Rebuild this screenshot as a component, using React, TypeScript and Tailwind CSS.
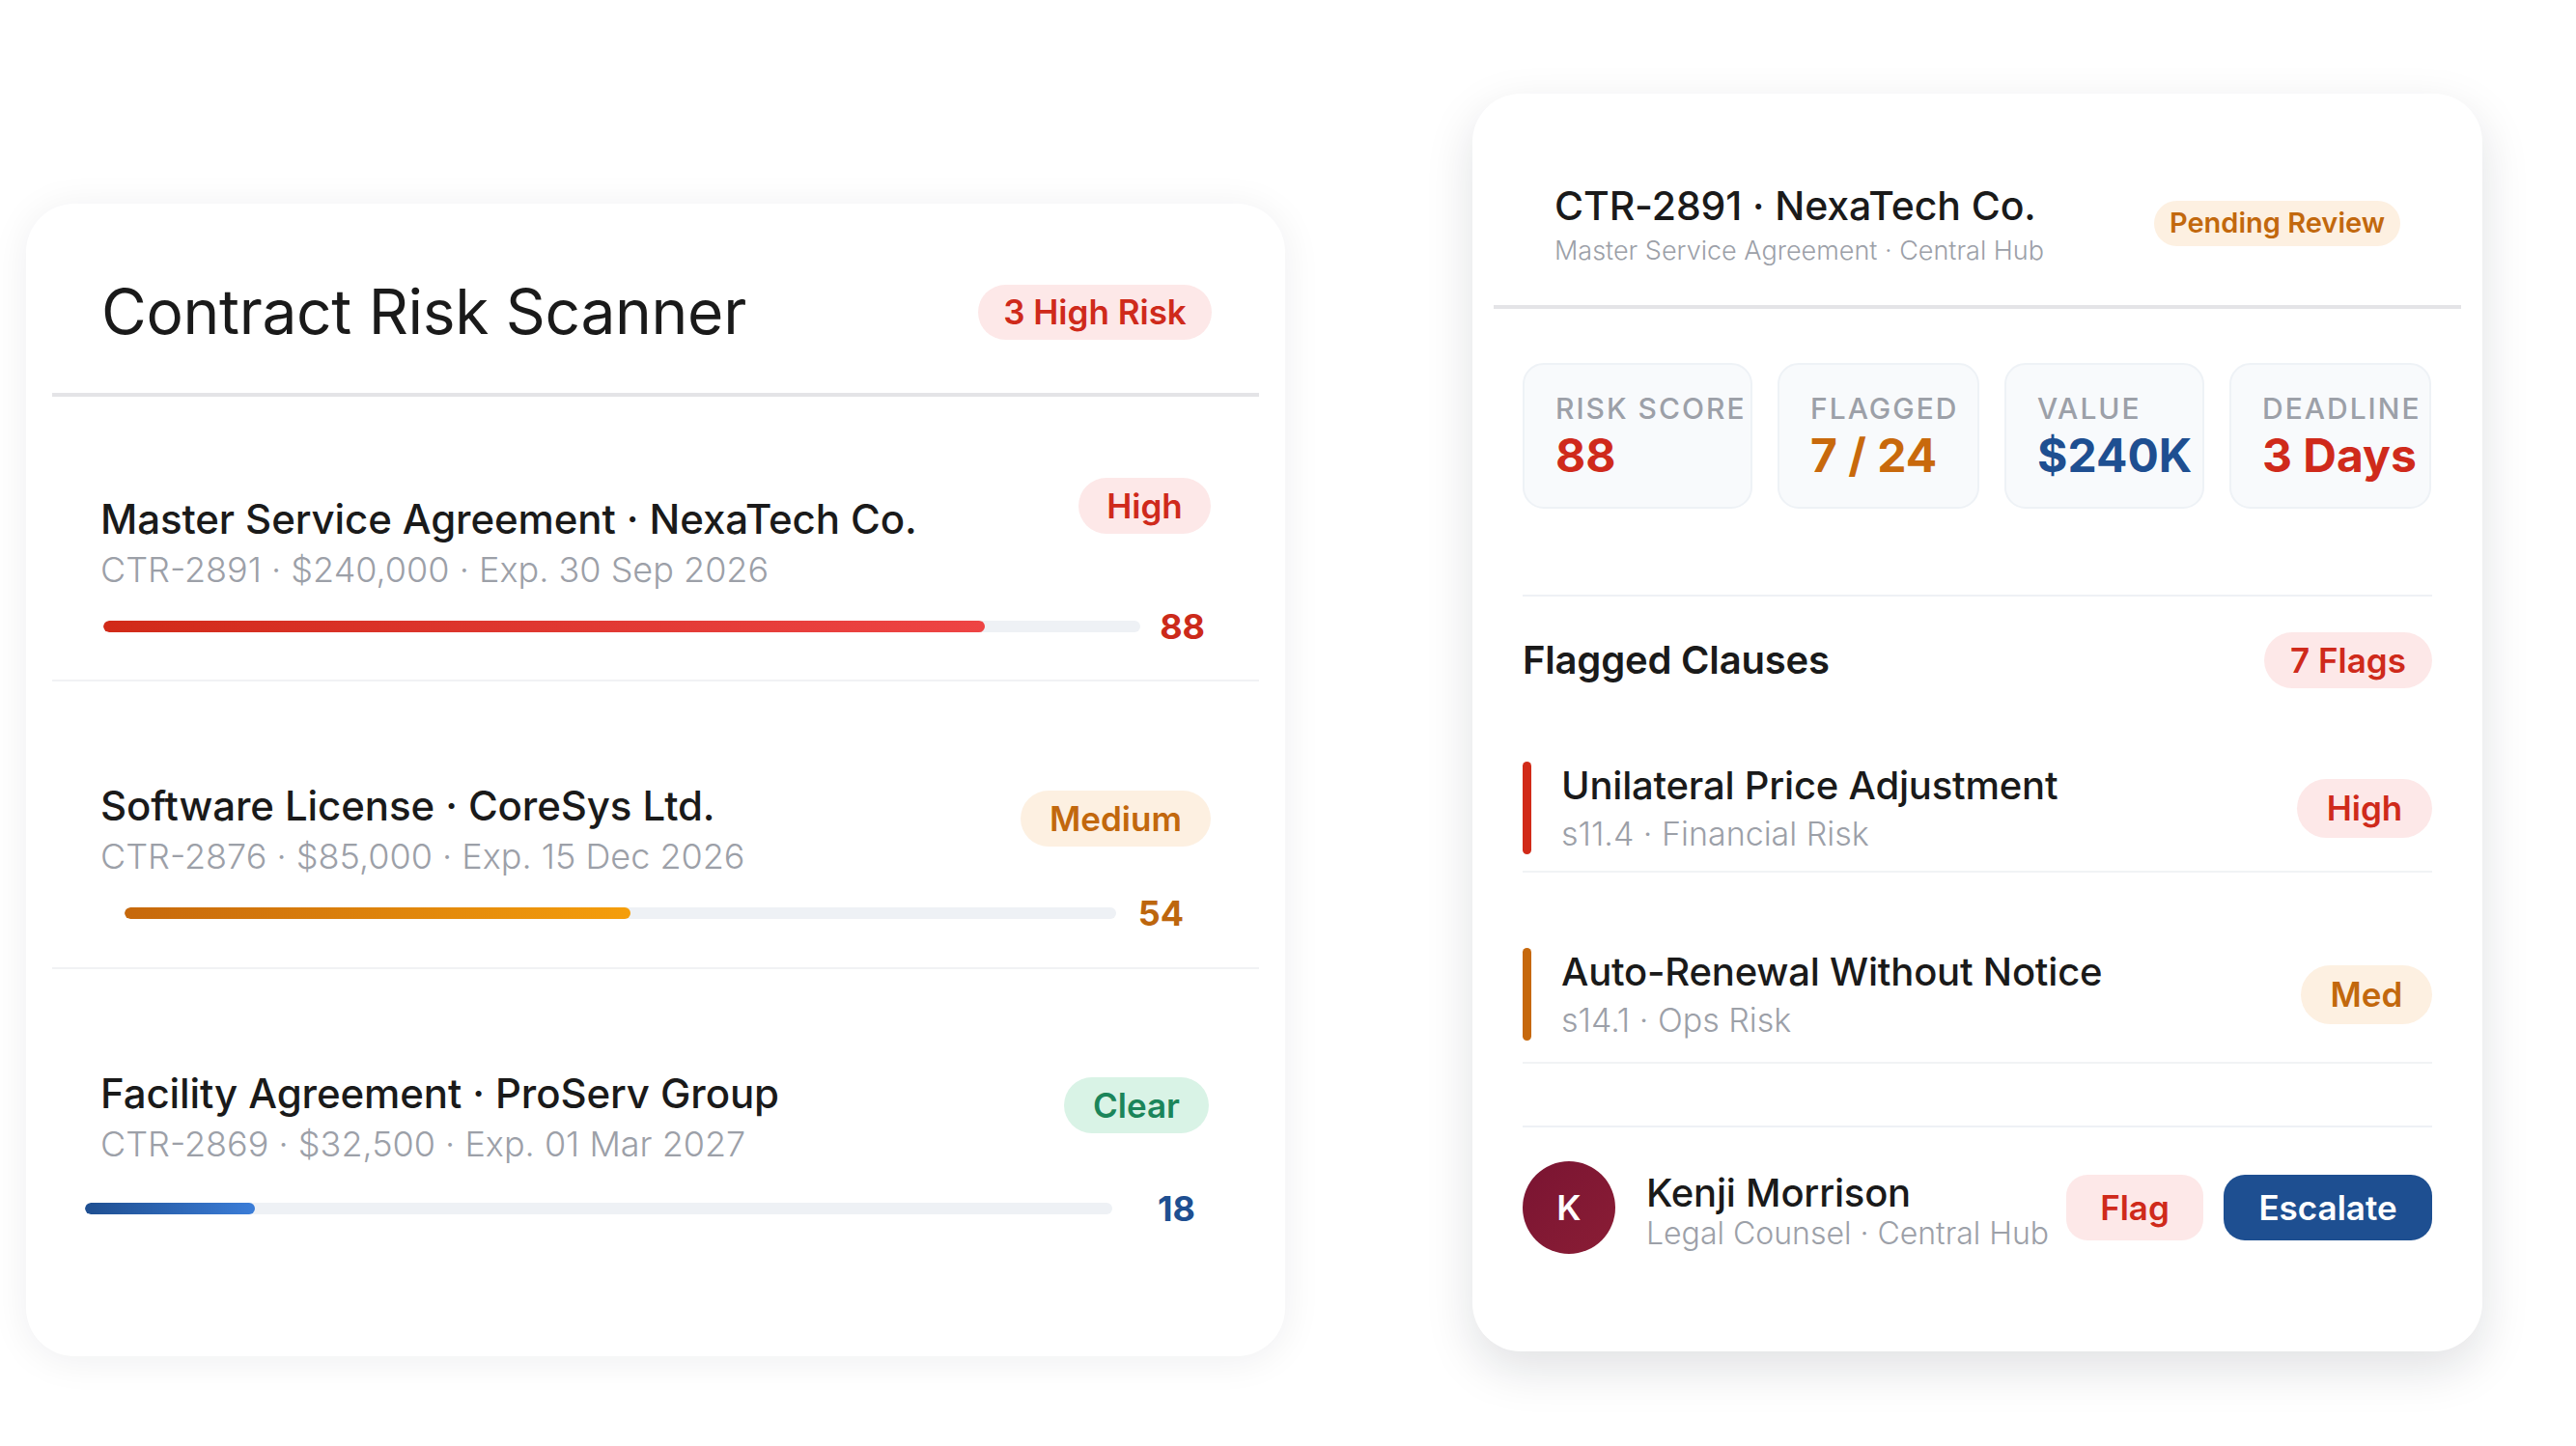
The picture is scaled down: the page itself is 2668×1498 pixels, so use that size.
import React from "react";

type Tone = "red" | "amber" | "green" | "blue";

const PILL: Record<Tone, string> = {
  red: "bg-[#fde8e8] text-[#cf2a1b]",
  amber: "bg-[#fdf0e1] text-[#c2680d]",
  green: "bg-[#d9f3e6] text-[#1b855a]",
  blue: "bg-[#e3ecf8] text-[#1e4f91]",
};

const Pill = ({
  tone,
  children,
  className = "",
}: {
  tone: Tone;
  children: React.ReactNode;
  className?: string;
}) => (
  <span
    className={`inline-flex items-center justify-center rounded-full font-semibold whitespace-nowrap ${PILL[tone]} ${className}`}
  >
    {children}
  </span>
);

type Contract = {
  title: string;
  meta: string;
  level: string;
  tone: Tone;
  score: number;
  fill: number;
  barColor: string;
  scoreColor: string;
  rowPad: string;
  badgeShift: string;
  badgeSize: string;
  barWrap: string;
  barTop: string;
};

const CONTRACTS: Contract[] = [
  {
    title: "Master Service Agreement · NexaTech Co.",
    meta: "CTR-2891 · $240,000 · Exp. 30 Sep 2026",
    level: "High",
    tone: "red",
    score: 88,
    fill: 85,
    barColor: "bg-gradient-to-r from-[#d12a18] to-[#ee4444]",
    scoreColor: "text-[#cc2a1a]",
    rowPad: "pt-[101px] pb-[33px]",
    badgeShift: "-mt-[17px] w-[137px]",
    badgeSize: "h-[58px]",
    barWrap: "ml-[3px] mr-[6px] gap-[20px]",
    barTop: "mt-[15px]",
  },
  {
    title: "Software License · CoreSys Ltd.",
    meta: "CTR-2876 · $85,000 · Exp. 15 Dec 2026",
    level: "Medium",
    tone: "amber",
    score: 54,
    fill: 51,
    barColor: "bg-gradient-to-r from-[#c6680c] to-[#f59e0b]",
    scoreColor: "text-[#bd660d]",
    rowPad: "pt-[103px] pb-[34px]",
    badgeShift: "mt-[10px] w-[197px]",
    badgeSize: "h-[58px]",
    barWrap: "ml-[25px] mr-[28px] gap-[23px]",
    barTop: "mt-[15px]",
  },
  {
    title: "Facility Agreement · ProServ Group",
    meta: "CTR-2869 · $32,500 · Exp. 01 Mar 2027",
    level: "Clear",
    tone: "green",
    score: 18,
    fill: 16.5,
    barColor: "bg-gradient-to-r from-[#1f4f91] to-[#3b7dd8]",
    scoreColor: "text-[#1e4f91]",
    rowPad: "pt-[103px]",
    badgeShift: "mt-[9px] w-[150px] mr-[2px]",
    badgeSize: "h-[58px]",
    barWrap: "-ml-[16px] mr-[16px] gap-[47px]",
    barTop: "mt-[23px]",
  },
];

const ContractRow = ({ c, last }: { c: Contract; last: boolean }) => (
  <div className={`px-[50px] ${c.rowPad} ${last ? "" : "border-b-2 border-[#f1f2f4]"}`}>
    <div className="flex items-start justify-between">
      <div className="flex flex-col">
        <div className="text-[42px] leading-[52px] font-medium text-[#1a1a1a] tracking-[-0.1px]">
          {c.title}
        </div>
        <div className="mt-[4px] text-[36px] leading-[44px] font-light text-[#9ca0a8]">
          {c.meta}
        </div>
      </div>
      <Pill tone={c.tone} className={`${c.badgeShift} ${c.badgeSize} text-[35px]`}>
        {c.level}
      </Pill>
    </div>
    <div className={`flex items-center ${c.barWrap} ${c.barTop}`}>
      <div className="flex-1 h-[12px] rounded-full bg-[#eef1f5] overflow-hidden">
        <div className={`h-full rounded-full ${c.barColor}`} style={{ width: `${c.fill}%` }} />
      </div>
      <span className={`text-[36px] leading-[44px] font-bold ${c.scoreColor}`}>{c.score}</span>
    </div>
  </div>
);

const STATS = [
  { label: "RISK SCORE", value: "88", color: "text-[#cf2a1b]", w: "w-[238px]" },
  { label: "FLAGGED", value: "7 / 24", color: "text-[#c8690c]", w: "w-[209px]" },
  { label: "VALUE", value: "$240K", color: "text-[#1e4f91]", w: "w-[207px]" },
  { label: "DEADLINE", value: "3 Days", color: "text-[#cf2a1b]", w: "w-[209px]" },
];

const CLAUSES = [
  {
    title: "Unilateral Price Adjustment",
    meta: "s11.4 · Financial Risk",
    level: "High",
    tone: "red" as Tone,
    bar: "bg-[#d12a18]",
    pad: "pt-[76px] pb-[17px]",
    badge: "w-[140px] h-[61px]",
  },
  {
    title: "Auto-Renewal Without Notice",
    meta: "s14.1 · Ops Risk",
    level: "Med",
    tone: "amber" as Tone,
    bar: "bg-[#c6680c]",
    pad: "pt-[78px] pb-[22px]",
    badge: "w-[136px] h-[61px]",
  },
];

const ScannerCard = () => (
  <div className="w-[1304px] h-[1194px] mt-[211px] shrink-0 rounded-[50px] bg-white px-[27px] shadow-[0_4px_40px_rgba(15,23,42,0.07)]">
    <div className="flex items-center justify-between px-[51px] pt-[72px] pb-[44px]">
      <h1 className="text-[64px] leading-[80px] font-normal text-[#1a1a1a] tracking-[-0.3px]">
        Contract Risk Scanner
      </h1>
      <Pill tone="red" className="w-[242px] h-[57px] text-[35px] -mr-[2px]">
        3 High Risk
      </Pill>
    </div>
    <div className="h-[4px] bg-[#e4e4e7]" />
    {CONTRACTS.map((c, i) => (
      <ContractRow key={c.title} c={c} last={i === CONTRACTS.length - 1} />
    ))}
  </div>
);

const DetailCard = () => (
  <div className="w-[1046px] h-[1303px] mt-[97px] shrink-0 rounded-[50px] bg-white px-[22px] shadow-[0_18px_50px_rgba(15,23,42,0.13)]">
    <div className="flex items-center justify-between px-[63px] pt-[91px] pb-[38px]">
      <div className="flex flex-col">
        <div className="text-[41px] leading-[50px] font-medium text-[#1a1a1a] tracking-[-0.1px]">
          CTR-2891 · NexaTech Co.
        </div>
        <div className="mt-[4px] text-[27px] leading-[36px] font-light text-[#9ca0a8]">
          Master Service Agreement · Central Hub
        </div>
      </div>
      <Pill tone="amber" className="w-[255px] h-[47px] text-[29px] font-medium mt-[-4px]">
        Pending Review
      </Pill>
    </div>
    <div className="h-[4px] bg-[#e4e4e7]" />

    <div className="px-[30px]">
      <div className="mt-[56px] flex gap-[26px]">
        {STATS.map((s) => (
          <div
            key={s.label}
            className={`${s.w} h-[151px] rounded-[22px] border-2 border-[#eef2f6] bg-[#f8fafc] pl-[32px] pt-[26px]`}
          >
            <div className="text-[30px] leading-[38px] font-medium tracking-[2px] text-[#9ca0a8] whitespace-nowrap">
              {s.label}
            </div>
            <div className={`mt-[2px] text-[48px] leading-[56px] font-bold ${s.color} whitespace-nowrap`}>
              {s.value}
            </div>
          </div>
        ))}
      </div>

      <div className="mt-[89px] h-[2px] bg-[#eef1f5]" />

      <div className="mt-[37px] flex items-center justify-between">
        <h2 className="text-[40px] leading-[50px] font-semibold text-[#1a1a1a] tracking-[-0.2px]">
          Flagged Clauses
        </h2>
        <Pill tone="red" className="w-[174px] h-[58px] text-[35px]">
          7 Flags
        </Pill>
      </div>

      {CLAUSES.map((c) => (
        <div key={c.title} className={`${c.pad} border-b-2 border-[#f1f3f5]`}>
          <div className="flex items-stretch">
            <div className={`w-[9px] rounded-full ${c.bar}`} />
            <div className="ml-[31px] flex flex-1 items-center justify-between">
              <div className="flex flex-col">
                <div className="text-[40px] leading-[50px] font-medium text-[#1a1a1a] tracking-[-0.2px]">
                  {c.title}
                </div>
                <div className="mt-[4px] text-[34px] leading-[42px] font-light text-[#9ca0a8]">
                  {c.meta}
                </div>
              </div>
              <Pill tone={c.tone} className={`${c.badge} text-[35px]`}>
                {c.level}
              </Pill>
            </div>
          </div>
        </div>
      ))}

      <div className="mt-[64px] h-[2px] bg-[#eef1f5]" />

      <div className="mt-[35px] flex items-center">
        <div className="w-[96px] h-[96px] rounded-full bg-gradient-to-br from-[#7a1432] to-[#8a1d35] flex items-center justify-center text-white text-[36px] font-semibold">
          K
        </div>
        <div className="ml-[32px] mt-[8px] flex flex-col">
          <div className="text-[40px] leading-[48px] font-medium text-[#1a1a1a] tracking-[-0.2px]">
            Kenji Morrison
          </div>
          <div className="-mt-[2px] text-[32px] leading-[40px] font-light text-[#9ca0a8]">
            Legal Counsel · Central Hub
          </div>
        </div>
        <div className="ml-auto flex gap-[21px]">
          <button className="w-[142px] h-[68px] rounded-[22px] bg-[#fde8e8] text-[#cf2a1b] text-[35px] font-semibold">
            Flag
          </button>
          <button className="w-[216px] h-[68px] rounded-[22px] bg-[#1e4f91] text-white text-[35px] font-semibold">
            Escalate
          </button>
        </div>
      </div>
    </div>
  </div>
);

export default function App() {
  return (
    <div
      className="w-[2668px] h-[1498px] bg-white flex items-start pl-[27px] gap-[194px] overflow-hidden"
      style={{ fontFamily: "Inter, 'Noto Sans', sans-serif" }}
    >
      <ScannerCard />
      <DetailCard />
    </div>
  );
}
